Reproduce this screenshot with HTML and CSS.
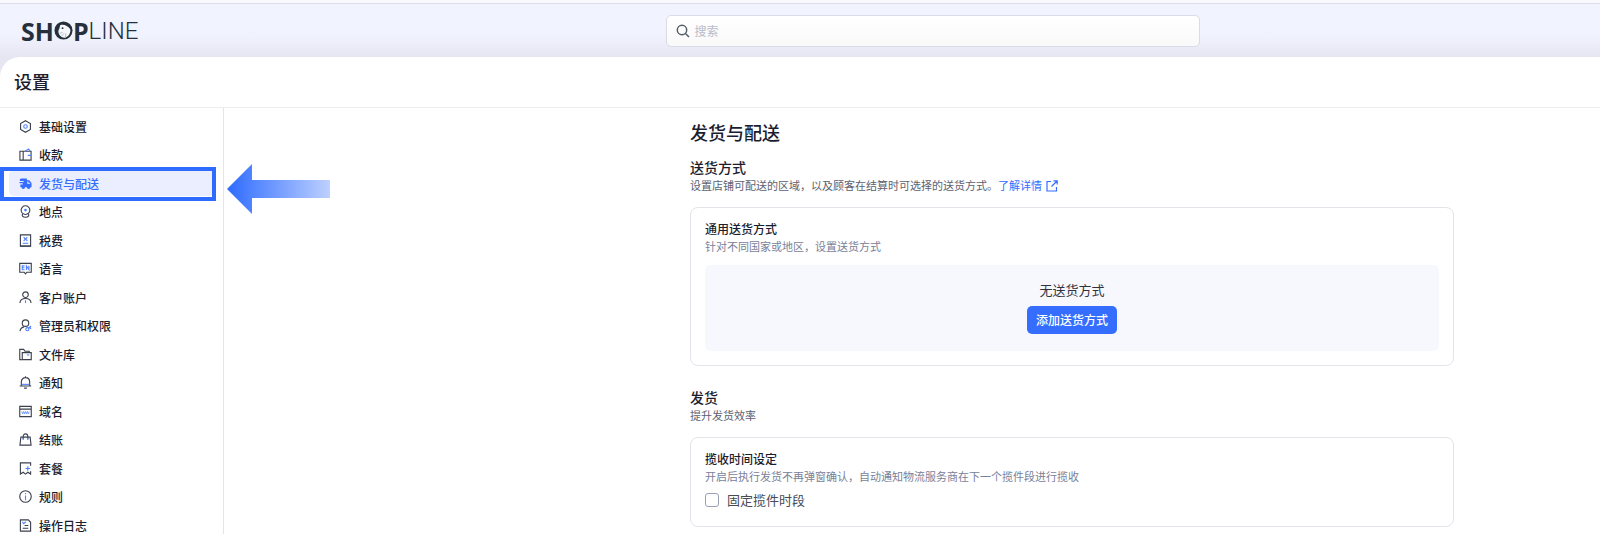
FILE: index.html
```html
<!DOCTYPE html>
<html lang="zh-CN">
<head>
<meta charset="utf-8">
<title>发货与配送</title>
<link rel="stylesheet" href="styles.css">
</head>
<body>
<header class="topbar">
  <a class="logo" href="#" aria-label="SHOPLINE">
    <span class="logo-bold">SH</span>
    <svg class="logo-o" viewBox="0 0 20 20"><circle cx="10" cy="10" r="9.500" fill="#25303b"/><path d="M6.500 4.500C10 3 14.500 5 17 8.500C18 12.500 15.500 16.500 12 17.500C10 17.800 7.500 17 6.500 15.500C4 13 4.500 9.500 5.500 8.500Z" fill="#f6f7fd"/><circle cx="9" cy="7.500" r="1" fill="#25303b"/><path d="M6 13L9 12M8 16L10.500 13M12 17L12.500 13" stroke="#8a919c" stroke-width=".6"/></svg>
    <span class="logo-bold">P</span><span class="logo-light">LINE</span>
  </a>
  <label class="search">
    <svg viewBox="0 0 14 14" fill="none" stroke="#555d68" stroke-width="1.500"><circle cx="6" cy="6" r="4.700"/><path d="M9.500 9.500L13 13"/></svg>
    <input type="search" placeholder="搜索" aria-label="搜索">
  </label>
</header>
<div class="panel">
  <h1 class="panel-title">设置</h1>
  <div class="body">
    <nav class="sidebar">
      <ul class="menu">
        <li><a href="#"><svg viewBox="0 0 14 14"><path d="M7 .8L12.300 3.800V10.200L7 13.200L1.700 10.200V3.800Z"/><circle class="b" cx="7" cy="7" r="1.900"/></svg>基础设置</a></li>
        <li><a href="#"><svg viewBox="0 0 14 14"><path d="M1 3.500H13V13H1ZM4.500 3.500V13"/><path class="b" d="M6.500 3.500L10.500 1L12 3.500M9.500 8H13"/></svg>收款</a></li>
        <li class="current"><a href="#" aria-current="page"><svg viewBox="0 0 14 14"><path class="f" d="M2 1.500H8.500V3.500H11L13.500 6.500V11H12.300A1.900 1.900 0 0 1 8.500 11H6.500A1.900 1.900 0 0 1 2.700 11H1.500V8H4V6.800H.5V5.500H5V4.300H1V2.500Z"/><path d="M9.500 4.800V6.700H12" stroke="#eaeefe"/></svg>发货与配送</a>
          <svg class="arrow" viewBox="0 0 104 50" aria-hidden="true"><defs><linearGradient id="fade"><stop offset="0" stop-color="#2e6bff"/><stop offset="1" stop-color="#bdd0ff"/></linearGradient></defs><path d="M0 25L25 0V16H103V34H25V50Z" fill="url(#fade)"/></svg>
        </li>
        <li><a href="#"><svg viewBox="0 0 14 14"><circle cx="7" cy="5.500" r="4.700"/><path d="M4 9.500C2.500 11 4 13.200 7 13.200S11.500 11 10 9.500"/><circle class="bf" cx="7" cy="5.500" r="1.500"/></svg>地点</a></li>
        <li><a href="#"><svg viewBox="0 0 14 14"><path d="M1.500 1H12.500V13H1.500Z"/><path d="M1 13H13"/><path class="b" d="M5 3.500L9 7.500M9 3.500L5 7.500M4 10H10"/></svg>税费</a></li>
        <li><a href="#"><svg viewBox="0 0 14 14"><path d="M.8 1.500H13.200V11H8.500L7 12.800L5.500 11H.8Z"/><path class="b" d="M6 4.200H3.500V8.300H6M3.500 6.200H6M8 8.500V4.200L10.700 8.300V4"/></svg>语言</a></li>
        <li><a href="#"><svg viewBox="0 0 14 14"><circle cx="7" cy="4" r="3"/><path d="M1 13C1.500 6.500 12.500 6.500 13 13"/><path class="b" d="M7 10V13"/></svg>客户账户</a></li>
        <li><a href="#"><svg viewBox="0 0 14 14"><circle cx="7" cy="4.500" r="3.500"/><path d="M1 13C1.500 10.500 3 9 5.500 8.500"/><circle class="b" cx="9" cy="11" r="1.700"/><path class="b" d="M10.200 10L13 7.500M11.500 9L13 10.500"/></svg>管理员和权限</a></li>
        <li><a href="#"><svg viewBox="0 0 14 14"><path d="M3 12.500H.8V1.500H5L6.500 3.500H11V5"/><path d="M3.500 12.500V5H13.200V12.500Z"/><path class="b" d="M8.500 7.500H11"/></svg>文件库</a></li>
        <li><a href="#"><svg viewBox="0 0 14 14"><path d="M2.500 10.500V6.500C2.500 .2 11.500 .2 11.500 6.500V10.500M.8 10.800H13.200M7 .3V2M5.500 13H8.500"/><path class="b" d="M3 9H11"/></svg>通知</a></li>
        <li><a href="#"><svg viewBox="0 0 14 14"><path d="M.8 1.500H13.200V12.500H.8ZM.8 4.500H13.200"/><path class="b" stroke-width=".8" d="M3 7L4 9.500L5 7L6 9.500L7 7L8 9.500L9 7L10 9.500L11 7"/></svg>域名</a></li>
        <li><a href="#"><svg viewBox="0 0 14 14"><path d="M2 4.500H12L13 13H1Z"/><path d="M4.500 7V4C4.500 0 9.500 0 9.500 4V7"/><path class="b" d="M4.500 5V7M9.500 5V7"/></svg>结账</a></li>
        <li><a href="#"><svg viewBox="0 0 14 14"><path d="M12.500 4V1H1.500V13L4.500 11L7 13L9.500 11L12.500 13V10"/><path class="b" d="M9.500 4.500V9.500M7 7H12"/></svg>套餐</a></li>
        <li><a href="#"><svg viewBox="0 0 14 14"><circle cx="7" cy="7" r="6.200"/><path class="b" d="M7 6V11M7 3.200V4.700"/></svg>规则</a></li>
        <li><a href="#"><svg viewBox="0 0 14 14"><path d="M1.500 1H10L12.500 3.500V13H1.500ZM6 7H10M4 10H10"/><path class="b" d="M3.500 3L5 5L7.500 3"/></svg>操作日志</a></li>
      </ul>
    </nav>
    <main class="main">
      <div class="content">
        <h2 class="page-title">发货与配送</h2>
        <section class="section">
          <h3 class="section-title">送货方式</h3>
          <p class="section-desc">设置店铺可配送的区域，以及顾客在结算时可选择的送货方式。<a class="link" href="#">了解详情<svg viewBox="0 0 12 12" fill="none" stroke="currentColor" stroke-width="1.200"><path d="M5 1.500H1V11H10.500V7M7.500 .8H11.200V4.500M11 1L5.500 6.500"/></svg></a></p>
          <div class="card">
            <h4 class="card-title">通用送货方式</h4>
            <p class="card-desc">针对不同国家或地区，设置送货方式</p>
            <div class="empty">
              <p class="empty-text">无送货方式</p>
              <button class="primary" type="button">添加送货方式</button>
            </div>
          </div>
        </section>
        <section class="section">
          <h3 class="section-title">发货</h3>
          <p class="section-desc">提升发货效率</p>
          <div class="card">
            <h4 class="card-title">揽收时间设定</h4>
            <p class="card-desc">开启后执行发货不再弹窗确认，自动通知物流服务商在下一个揽件段进行揽收</p>
            <label class="check"><input type="checkbox">固定揽件时段</label>
          </div>
        </section>
      </div>
    </main>
  </div>
</div>
</body>
</html>
```
FILE: styles.css
```css
* { box-sizing: border-box; }
body, h1, h2, h3, h4, p, ul { margin: 0; padding: 0; }
body {
  min-height: 100vh;
  display: flex;
  flex-direction: column;
  font-family: "Noto Sans CJK SC", sans-serif;
  color: #1b1d2e;
  background: linear-gradient(#f1f4ff 20px, #f0f2fe 36px, #e6e6f3 57px);
}
a { color: inherit; text-decoration: none; }

.topbar {
  display: flex;
  align-items: center;
  height: 57px;
  padding-top: 1px;
  border-top: 3px solid #f8f9fd;
  box-shadow: inset 0 1px #dcdde8;
}
.logo {
  display: flex;
  align-items: center;
  margin-left: 21px;
  font-size: 25px;
  line-height: 28px;
  color: #25303b;
}
.logo-bold { font-family: "Open Sans", sans-serif; font-weight: 700; }
.logo-light { font-family: Roboto, sans-serif; font-weight: 300; font-size: 24px; }
.logo-o { width: 19px; height: 19px; }
.search {
  display: flex;
  align-items: center;
  gap: 5px;
  width: 33.4%;
  height: 32px;
  margin-left: auto;
  margin-right: 25%;
  padding: 0 9px;
  border: 1px solid #d9dbe6;
  border-radius: 5px;
  background: linear-gradient(#fff, #f9f9fa);
}
.search svg { width: 14px; height: 14px; }
.search input {
  flex: 1;
  border: 0;
  outline: 0;
  padding: 0;
  background: transparent;
  font: 12px "Noto Sans CJK SC", sans-serif;
}
.search input::placeholder { color: #b9bbc9; }

.panel {
  flex: 1;
  display: flex;
  flex-direction: column;
  background: #fff;
  border-top-left-radius: 20px;
}
.panel-title {
  height: 51px;
  padding-left: 14px;
  border-bottom: 1px solid #eeeef1;
  font-size: 18px;
  line-height: 48px;
  font-weight: 500;
}
.body { flex: 1; display: flex; }

.sidebar {
  display: flex;
  width: 224px;
  padding: 9px 9px 1px;
  border-right: 1px solid #e4e5e9;
}
.menu {
  flex: 1;
  display: flex;
  flex-direction: column;
  justify-content: space-between;
  list-style: none;
}
.menu li { position: relative; height: 18px; }
.menu a {
  display: flex;
  align-items: center;
  gap: 7px;
  height: 26px;
  margin: -4px 0;
  padding-left: 10px;
  border-radius: 5px;
  font-size: 12px;
  font-weight: 500;
}
.menu a svg {
  width: 13px;
  height: 13px;
  fill: none;
  stroke: #3b404e;
  stroke-width: 1.2;
}
.menu a .b { stroke: #5182ff; }
.menu a .bf { fill: #5182ff; stroke: none; }
.menu a .f { fill: #356dff; stroke: none; }
.menu .current a { background: #eaeefe; color: #356dff; }
.current::after {
  content: "";
  position: absolute;
  inset: -7px -2px -9px -9px;
  border: 4px solid #2e6bff;
}
.arrow {
  position: absolute;
  left: 218px;
  top: -10px;
  width: 104px;
  height: 50px;
}

.main { flex: 1; display: flex; justify-content: flex-end; padding: 11px 146px 8px 24px; }
.content { flex: 0 1 764px; }
.page-title { font-size: 18px; line-height: 26px; font-weight: 500; margin-bottom: 12px; }
.section + .section { margin-top: 21px; }
.section-title { font-size: 14px; line-height: 20px; font-weight: 500; }
.section-desc { font-size: 11px; line-height: 16px; color: #5d6170; margin-bottom: 14px; }
.link { color: #356dff; }
.link svg { width: 12px; height: 12px; margin-left: 4px; vertical-align: -2px; }
.card { padding: 12px 14px 14px; border: 1px solid #e3e4ea; border-radius: 8px; }
.card-title { font-size: 12px; line-height: 18px; font-weight: 500; }
.card-desc { font-size: 11px; line-height: 16px; color: #7a8199; }
.empty {
  display: flex;
  flex-direction: column;
  align-items: center;
  gap: 7px;
  margin-top: 11px;
  padding: 15px 16px 17px;
  border-radius: 5px;
  background: #f7f8fd;
}
.empty-text { font-size: 13px; line-height: 19px; color: #30323f; }
.primary {
  height: 28px;
  padding: 0 9px 1px;
  border: 0;
  border-radius: 5px;
  background: #356dff;
  color: #fff;
  font: 500 12px "Noto Sans CJK SC", sans-serif;
}
.check {
  display: flex;
  align-items: center;
  gap: 8px;
  margin-top: 6px;
  padding-bottom: 2px;
  font-size: 13px;
  line-height: 20px;
  color: #474a57;
}
.check input {
  appearance: none;
  width: 14px;
  height: 14px;
  margin: 0;
  border: 1px solid #9a9fb3;
  border-radius: 3px;
  background: #fff;
}
.check input:checked { background: #356dff; }
```
